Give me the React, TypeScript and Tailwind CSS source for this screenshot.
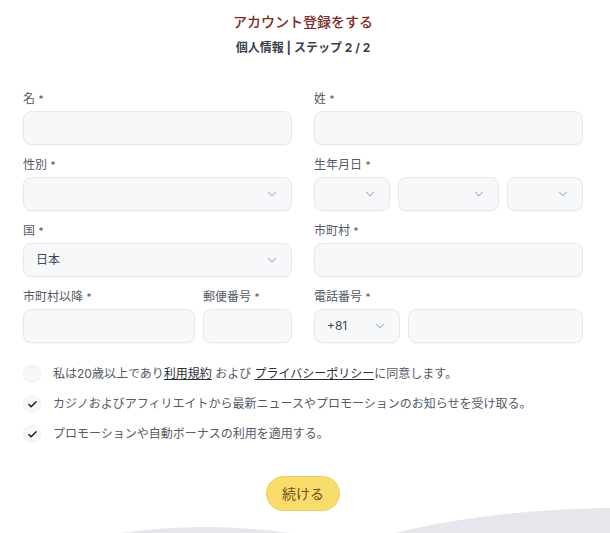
import { Check, ChevronDown } from 'lucide-react';

const fieldBox =
  'h-[34px] w-full rounded-lg border border-[#e6e8ee] bg-[#f7f8fa] shadow-[0_1px_1px_rgba(0,0,0,0.03)]';

function Label({ text }: { text: string }) {
  return (
    <p className="mb-1 h-4 text-[12px] leading-4 text-[#545a66]">
      {text} <span className="text-[10px] align-top">*</span>
    </p>
  );
}

function Input() {
  return <div className={fieldBox} />;
}

function Select({ value }: { value?: string }) {
  return (
    <div className={fieldBox + ' flex items-center justify-between pl-3 pr-[12px]'}>
      <span className="text-[12px] text-[#3f4652]">{value}</span>
      <ChevronDown size={14} strokeWidth={1.8} className="text-[#9ea8c8]" />
    </div>
  );
}

const consents = [
  { checked: false },
  { checked: true, text: 'カジノおよびアフィリエイトから最新ニュースやプロモーションのお知らせを受け取る。' },
  { checked: true, text: 'プロモーションや自動ボーナスの利用を適用する。' },
];

export default function App() {
  return (
    <div className="relative h-[533px] overflow-hidden bg-white font-[Inter,'Noto_Sans_CJK_JP',sans-serif]">
      <div className="ml-[23px] w-[560px] pt-[11px]">
        <h1 className="text-center text-[14px] leading-[22px] font-medium text-[#7b2b24]">
          アカウント登録をする
        </h1>
        <p className="mt-[4px] text-center text-[12px] leading-[22px] font-bold text-[#3a3f4a]">
          個人情報 | ステップ 2 / 2
        </p>

        <div className="mt-[32px] grid grid-cols-2 gap-x-[22px] gap-y-3">
          <div>
            <Label text="名" />
            <Input />
          </div>
          <div>
            <Label text="姓" />
            <Input />
          </div>

          <div>
            <Label text="性別" />
            <Select />
          </div>
          <div>
            <Label text="生年月日" />
            <div className="grid grid-cols-[76px_1fr_76px] gap-2">
              <Select />
              <Select />
              <Select />
            </div>
          </div>

          <div>
            <Label text="国" />
            <Select value="日本" />
          </div>
          <div>
            <Label text="市町村" />
            <Input />
          </div>

          <div className="grid grid-cols-[1fr_89px] gap-2">
            <div>
              <Label text="市町村以降" />
              <Input />
            </div>
            <div>
              <Label text="郵便番号" />
              <Input />
            </div>
          </div>
          <div>
            <Label text="電話番号" />
            <div className="grid grid-cols-[86px_1fr] gap-2">
              <Select value="+81" />
              <Input />
            </div>
          </div>
        </div>

        <ul className="mt-[22px] flex flex-col gap-3">
          {consents.map((c, i) => (
            <li key={i} className="flex h-[18px] items-center gap-3">
              <span className="flex h-[18px] w-[18px] shrink-0 items-center justify-center rounded-full border border-[#eceef3] bg-[#f7f8fa]">
                {c.checked && <Check size={11} strokeWidth={3} className="text-[#111827]" />}
              </span>
              <span className="text-[12px] text-[#545a66]">
                {c.text ?? (
                  <>
                    私は20歳以上であり<span className="text-[#2a2f38] underline">利用規約</span> および{' '}
                    <span className="text-[#2a2f38] underline">プライバシーポリシー</span>に同意します。
                  </>
                )}
              </span>
            </li>
          ))}
        </ul>

        <div className="mt-[33px] flex justify-center">
          <button className="h-[35px] w-[74px] rounded-full border border-[#ecd066] bg-[#f8dc6c] text-[14px] text-[#7a4b1e]">
            続ける
          </button>
        </div>
      </div>

      <svg
        className="absolute bottom-0 left-0 h-[30px] w-full"
        viewBox="0 0 610 30"
        preserveAspectRatio="none"
      >
        <path d="M120 30 Q 205 18 290 30 Z" fill="#e6e7ec" />
        <path d="M395 30 C 460 14 530 6 610 5 L 610 30 Z" fill="#e6e7ec" />
      </svg>
    </div>
  );
}
